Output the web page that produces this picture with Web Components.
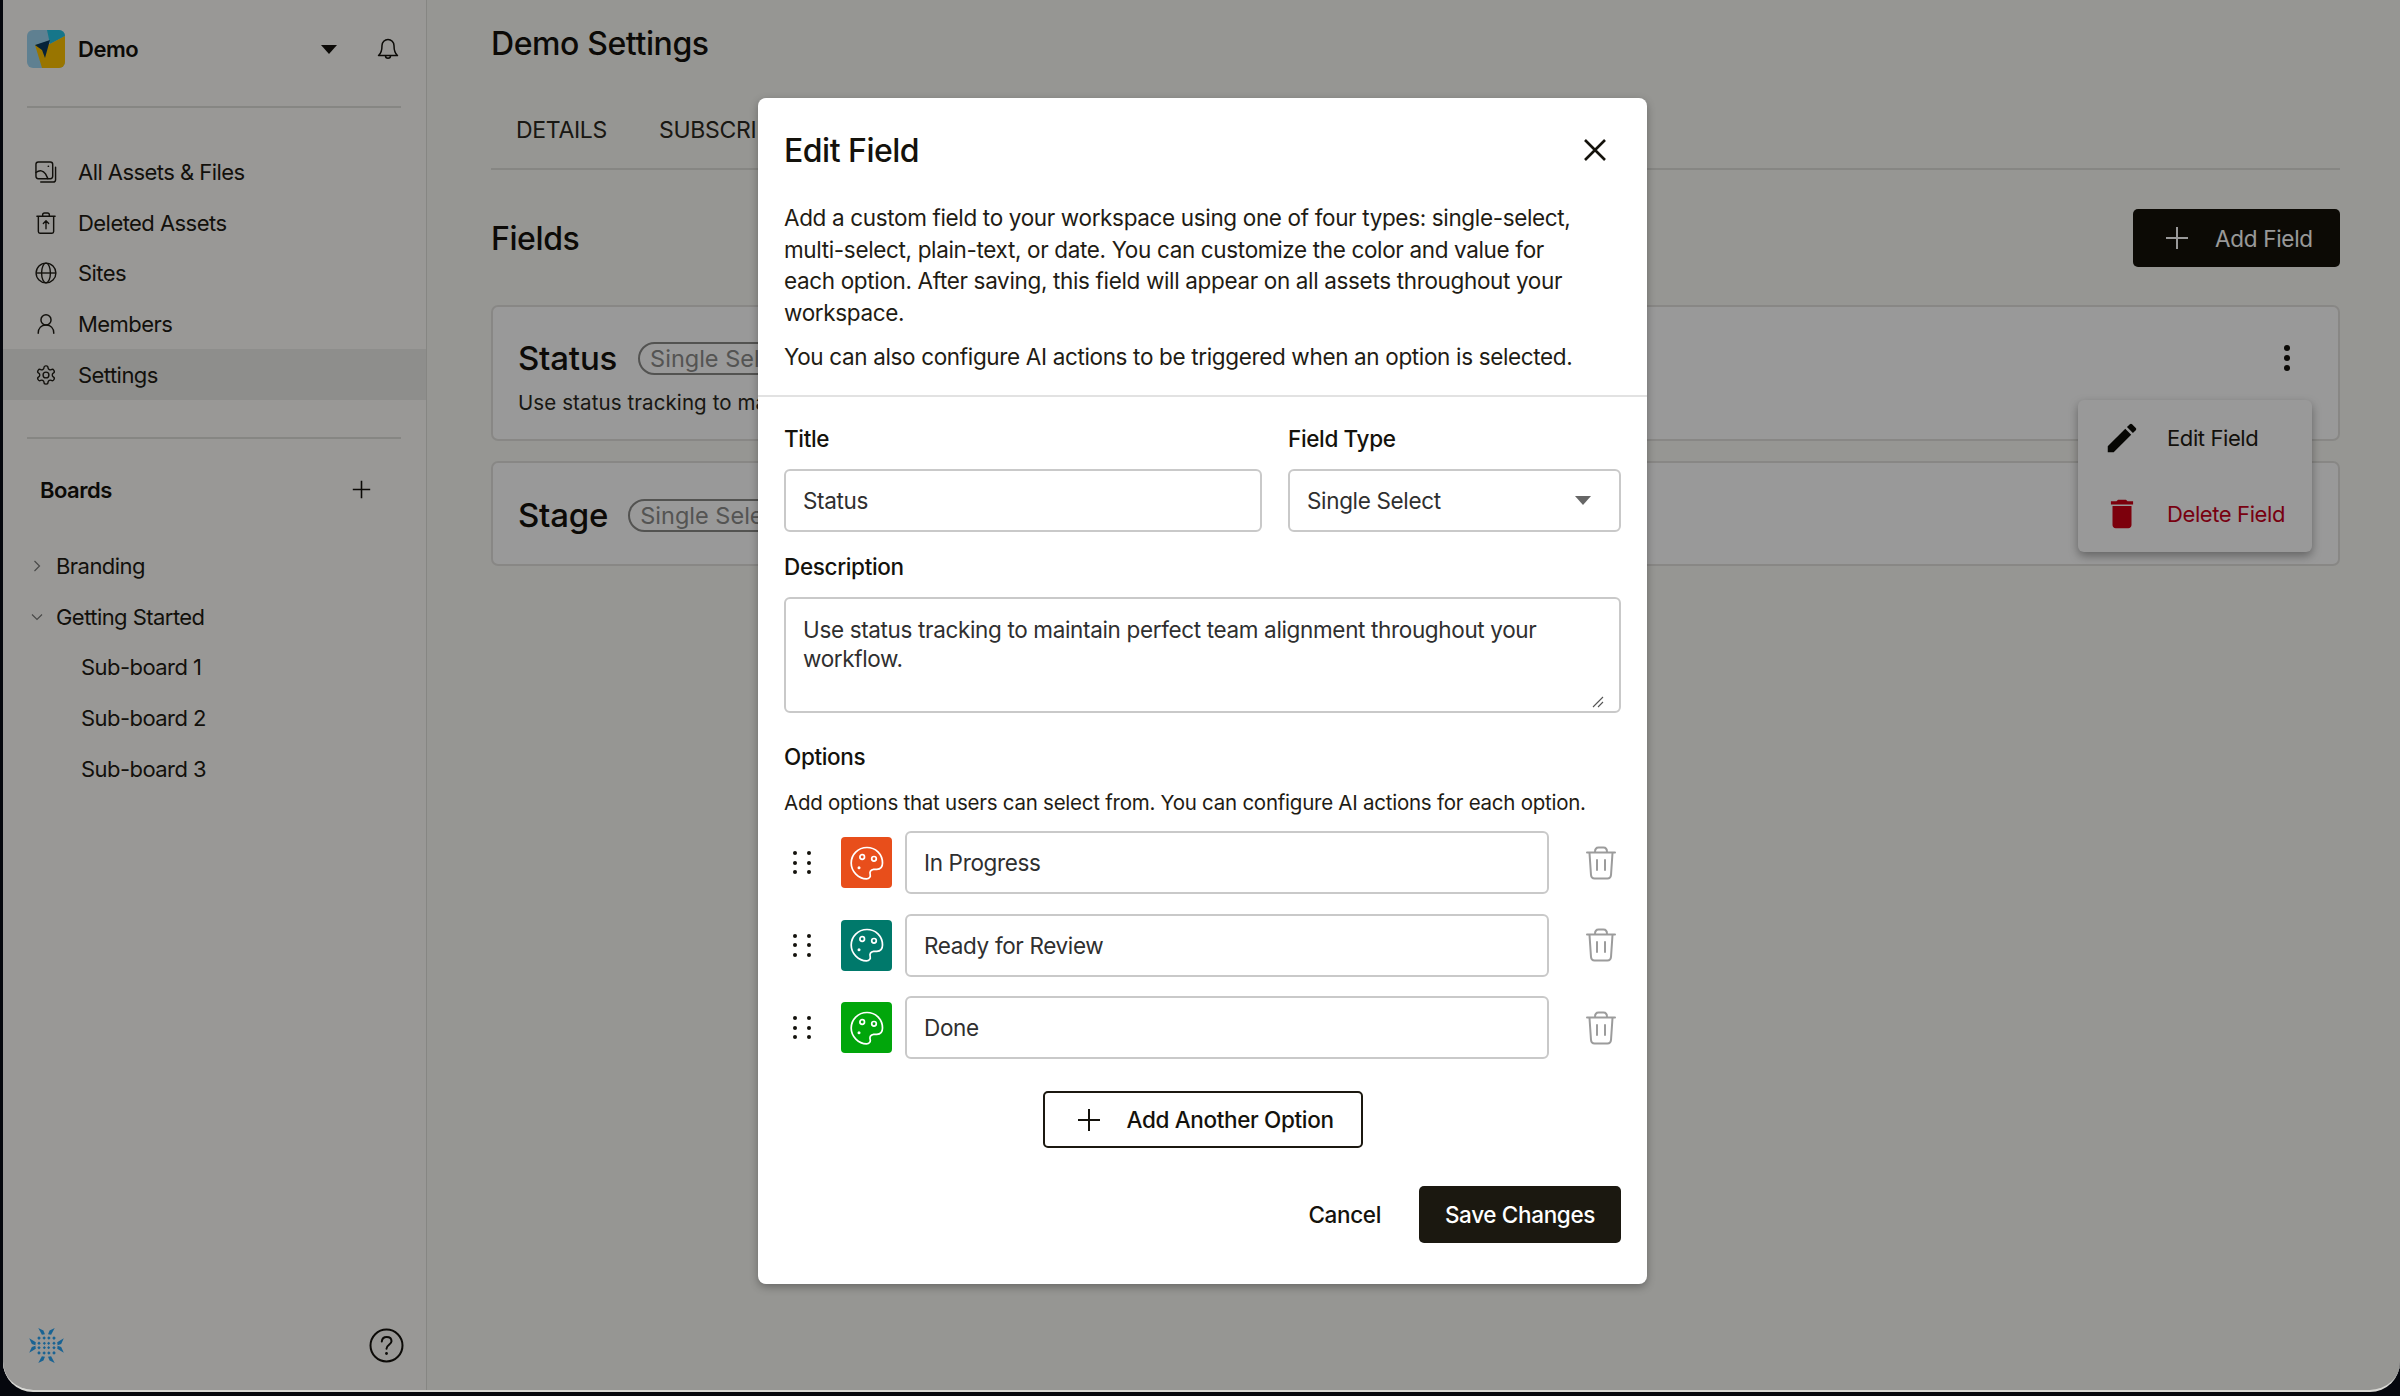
<!DOCTYPE html>
<html>
<head>
<meta charset="utf-8">
<title>Demo Settings</title>
<style>
  html, body { margin: 0; padding: 0; background: #05070d; }
  body { width: 2400px; height: 1396px; overflow: hidden; font-family: Inter, "Liberation Sans", sans-serif; color: #1b1810; }
</style>
</head>
<body>
<app-shell>
  <app-sidebar slot="sidebar"></app-sidebar>
  <settings-page slot="main"></settings-page>
  <action-menu slot="menu"></action-menu>
  <edit-field-dialog slot="dialog"></edit-field-dialog>
</app-shell>

<script>
const ICONS = {
  assets: `<svg viewBox="0 0 23 23" fill="none" stroke="currentColor" stroke-width="1.5" stroke-linejoin="round" stroke-linecap="round"><rect x="1" y="1" width="17.5" height="17.5" rx="2.5"/><path d="M1 12c4-3 7.5-2 10 1.5l2.5 5"/><circle cx="14" cy="5.5" r=".9" fill="currentColor" stroke="none"/><path d="M21.5 6.5v13a2.5 2.5 0 0 1-2.500 2.500H6"/></svg>`,
  deleted: `<svg viewBox="0 0 23 23" fill="none" stroke="currentColor" stroke-width="1.5" stroke-linejoin="round" stroke-linecap="round"><path d="M2 4.500h19"/><path d="M8 4.300V3a2 2 0 0 1 2-2h3a2 2 0 0 1 2 2v1.300"/><path d="M3.500 5v15.500a1.700 1.700 0 0 0 1.700 1.700h12.600a1.700 1.700 0 0 0 1.700-1.700V5"/><path d="M11.500 17.500v-8M8.700 12l2.800-2.800 2.800 2.800" stroke-width="1.400"/></svg>`,
  globe: `<svg viewBox="0 0 24 24" fill="none" stroke="currentColor" stroke-width="1.500"><circle cx="12" cy="12" r="10.800"/><ellipse cx="12" cy="12" rx="4.800" ry="10.800"/><path d="M1.200 12h21.600"/></svg>`,
  person: `<svg viewBox="0 0 24 24" fill="none" stroke="currentColor" stroke-width="1.600" stroke-linecap="round"><circle cx="12" cy="7.500" r="5.500"/><path d="M3.500 22c0-5.500 3.500-9 8.500-9s8.500 3.500 8.500 9"/></svg>`,
  gear: `<svg viewBox="0 0 24 24" fill="none" stroke="currentColor" stroke-width="1.500" stroke-linejoin="round"><path d="M12.220 2h-.44a2 2 0 0 0-2 2v.18a2 2 0 0 1-1 1.730l-.43.250a2 2 0 0 1-2 0l-.15-.08a2 2 0 0 0-2.730.730l-.22.380a2 2 0 0 0 .730 2.730l.150.100a2 2 0 0 1 1 1.720v.510a2 2 0 0 1-1 1.740l-.150.090a2 2 0 0 0-.730 2.730l.220.380a2 2 0 0 0 2.730.730l.150-.08a2 2 0 0 1 2 0l.430.250a2 2 0 0 1 1 1.730V20a2 2 0 0 0 2 2h.440a2 2 0 0 0 2-2v-.18a2 2 0 0 1 1-1.730l.430-.250a2 2 0 0 1 2 0l.150.080a2 2 0 0 0 2.730-.730l.220-.390a2 2 0 0 0-.730-2.730l-.150-.08a2 2 0 0 1-1-1.740v-.5a2 2 0 0 1 1-1.740l.150-.090a2 2 0 0 0 .730-2.730l-.220-.380a2 2 0 0 0-2.730-.730l-.150.080a2 2 0 0 1-2 0l-.430-.250a2 2 0 0 1-1-1.730V4a2 2 0 0 0-2-2z"/><circle cx="12" cy="12" r="3.200"/></svg>`,
  bell: `<svg viewBox="0 0 24 24" fill="none" stroke="currentColor" stroke-width="1.500" stroke-linecap="round" stroke-linejoin="round"><path d="M6 8.500a6 6 0 0 1 12 0c0 6.500 1.500 8.500 3.500 10H2.500c2-1.500 3.500-3.500 3.500-10z"/><path d="M9.500 18.800a2.500 2.500 0 0 0 5 0"/></svg>`,
  plus: `<svg viewBox="0 0 24 24" fill="none" stroke="currentColor" stroke-width="2"><path d="M12 1v22M1 12h22"/></svg>`,
  palette: `<svg viewBox="0 0 34 34" fill="none" stroke="currentColor" stroke-width="1.700" stroke-linejoin="round"><path d="M17 1.500C8 1.500 1.200 8.500 1.200 17S8.500 32.800 16.500 32.800c2.800 0 4.300-2 3.700-4.200-.800-2.800.500-5 3.400-5.300h3.200c3.500 0 5.700-2.400 5.700-6.300C32.500 8 25.500 1.500 17 1.500z"/><circle cx="12.200" cy="11" r="2.300"/><circle cx="24" cy="12.800" r="2.300"/><circle cx="9" cy="21.800" r="1.500" fill="currentColor" stroke="none"/></svg>`,
  trash: `<svg viewBox="0 0 30 34" fill="none" stroke="currentColor" stroke-width="2" stroke-linecap="round" stroke-linejoin="round"><path d="M1 6.500h28"/><path d="M9 6c0-3 1.500-4.500 3.500-4.500h5C19.500 1.500 21 3 21 6"/><path d="M3.500 7L5 29c.200 2 1.500 3.500 3.500 3.500h13c2 0 3.300-1.500 3.500-3.500L26.500 7"/><path d="M11 14v10M19 14v10"/></svg>`,
  edit: `<svg viewBox="0 0 24 24" fill="currentColor"><path d="M3 17.250V21h3.750L17.810 9.940l-3.750-3.750L3 17.250zM20.710 7.040a1 1 0 0 0 0-1.410l-2.340-2.340a1 1 0 0 0-1.410 0l-1.830 1.830 3.750 3.750 1.830-1.830z"/></svg>`,
  remove: `<svg viewBox="0 0 24 24" fill="currentColor"><path d="M6 19c0 1.100.9 2 2 2h8c1.100 0 2-.9 2-2V7H6v12zM19 4h-3.500l-1-1h-5l-1 1H5v2h14V4z"/></svg>`
};

// shared shadow root setup, every component just hands over its html
class Base extends HTMLElement {
  constructor() {
    super();
    this.attachShadow({mode: 'open'});
  }
  connectedCallback() {
    this.shadowRoot.innerHTML = this.render();
  }
}

class AppShell extends Base {
  render() {
    return `<style>
      :host { display: block; width: 2400px; height: 1396px; }
      .window {
        position: relative; box-sizing: border-box; height: 1392px; margin-left: 3px;
        display: flex; overflow: hidden; background: #fbfaf6;
        border-bottom: 2px solid #d8d8d4; border-radius: 0 0 30px 30px;
      }
      .backdrop { position: absolute; inset: 0; background: rgba(0,0,0,.4); }
    </style>
    <div class="window">
      <slot name="sidebar"></slot>
      <slot name="main"></slot>
      <slot name="menu"></slot>
      <div class="backdrop"></div>
      <slot name="dialog"></slot>
    </div>`;
  }
}

class NavItem extends Base {
  render() {
    return `<style>
      :host { display: flex; align-items: center; height: 50.600px; padding-left: 32px; gap: 21px; font-size: 22px; letter-spacing: -.55px; color: #1f1c14; }
      :host([active]) { background: #ededea; }
      svg { width: 22px; height: 22px; flex: none; }
    </style>${ICONS[this.getAttribute('icon')]}<slot></slot>`;
  }
}

class TreeItem extends Base {
  render() {
    const level = this.getAttribute('level');
    const open = this.getAttribute('state');
    let arrow = '';
    if (open === 'closed') arrow = '<svg viewBox="0 0 12 12"><path d="M3.500 1l5 5-5 5"/></svg>';
    if (open === 'open') arrow = '<svg viewBox="0 0 12 12"><path d="M1 3.500l5 5 5-5"/></svg>';
    return `<style>
      :host { display: flex; align-items: center; height: 50.600px; font-size: 22px; letter-spacing: -.55px; color: #1f1c14; padding-left: ${level === '1' ? 78 : 28}px; }
      svg { width: 12px; height: 12px; flex: none; margin-right: 13px; fill: none; stroke: #7a7a78; stroke-width: 1.200; }
    </style>${arrow}<slot></slot>`;
  }
}

class AppSidebar extends Base {
  render() {
    return `<style>
      :host { display: flex; flex-direction: column; box-sizing: border-box; width: 424px; flex: none; height: 100%; background: #fffefb; border-right: 1px solid #e0dfdb; }
      .head { display: flex; align-items: center; height: 38px; margin: 30px 25px 0 24px; }
      .logo { width: 38px; height: 38px; flex: none; }
      .name { font-weight: 600; font-size: 22px; letter-spacing: -.5px; margin-left: 13px; color: #14120c; }
      .caret { width: 0; height: 0; border: 8px solid transparent; border-top: 9px solid #14120c; border-bottom: 0; margin-left: auto; margin-right: 39px; }
      .bell { width: 24px; height: 24px; margin-right: 1px; color: #14120c; }
      .rule { height: 2px; background: #e0dfdb; margin: 38px 25px 0 24px; flex: none; }
      nav { margin-top: 39px; }
      .boards { display: flex; align-items: center; justify-content: space-between; height: 40px; margin-top: 31px; padding: 0 55px 0 37px; font-weight: 600; font-size: 22px; letter-spacing: -.5px; color: #14120c; }
      .boards svg { width: 19px; height: 19px; color: #14120c; }
      .tree { margin-top: 31px; }
      .foot { margin-top: auto; display: flex; align-items: center; justify-content: space-between; padding: 0 22px 26px 25px; }
      .snow { width: 37px; height: 37px; }
      .help { width: 35px; height: 35px; margin-right: 0; }
    </style>
    <div class="head">
      <svg class="logo" viewBox="0 0 38 38">
        <defs><clipPath id="lg"><rect width="38" height="38" rx="6"/></clipPath></defs>
        <g clip-path="url(#lg)">
          <rect width="38" height="38" fill="#9fd6f2"/>
          <path d="M20 0h18v6l-15 8z" fill="#26c5e6"/>
          <path d="M38 6v32H15L8 15l15-1z" fill="#ffc400"/>
          <path d="M8 15l15-5-5 18-3-8z" fill="#0a3a5e"/>
        </g>
      </svg>
      <span class="name">Demo</span>
      <span class="caret"></span>
      <span class="bell">${ICONS.bell}</span>
    </div>
    <div class="rule"></div>
    <nav>
      <nav-item icon="assets">All Assets &amp; Files</nav-item>
      <nav-item icon="deleted">Deleted Assets</nav-item>
      <nav-item icon="globe">Sites</nav-item>
      <nav-item icon="person">Members</nav-item>
      <nav-item icon="gear" active>Settings</nav-item>
    </nav>
    <div class="rule" style="margin-top:37px"></div>
    <div class="boards"><span>Boards</span>${ICONS.plus}</div>
    <div class="tree">
      <tree-item state="closed">Branding</tree-item>
      <tree-item state="open">Getting Started</tree-item>
      <tree-item level="1">Sub-board 1</tree-item>
      <tree-item level="1">Sub-board 2</tree-item>
      <tree-item level="1">Sub-board 3</tree-item>
    </div>
    <div class="foot">
      <svg class="snow" viewBox="0 0 36 36" fill="#2aa5f5">
        <defs>
          <g id="q">
            <path d="M10 1l5 2.500 1.500 3.500-3 .5z"/>
            <path d="M1.200 11l2.500 5.500 3.500 1.300.4-3z"/>
            <rect x="9.500" y="9.500" width="2.500" height="2.500" transform="rotate(45 10.700 10.700)"/>
            <rect x="14.500" y="9.500" width="2.400" height="2.400" transform="rotate(45 15.700 10.700)"/>
            <rect x="9.500" y="14.500" width="2.400" height="2.400" transform="rotate(45 10.700 15.700)"/>
            <rect x="14.800" y="14.800" width="2.200" height="2.200" transform="rotate(45 15.900 15.900)"/>
          </g>
        </defs>
        <use href="#q"/>
        <use href="#q" transform="translate(36 0) scale(-1 1)"/>
        <use href="#q" transform="translate(0 36) scale(1 -1)"/>
        <use href="#q" transform="translate(36 36) scale(-1 -1)"/>
      </svg>
      <svg class="help" viewBox="0 0 35 35" fill="none" stroke="#14120c" stroke-width="2">
        <circle cx="17.500" cy="17.500" r="16"/>
        <path d="M12.800 13.500c.3-3 2.300-4.500 4.900-4.500 2.800 0 4.800 1.700 4.800 4.200 0 3.500-5 3.800-5 7.500" stroke-linecap="round"/>
        <circle cx="17.500" cy="25.500" r="1.400" fill="#14120c" stroke="none"/>
      </svg>
    </div>`;
  }
}

class FieldCard extends Base {
  render() {
    return `<style>
      :host { display: block; box-sizing: border-box; border: 2px solid #e3e2de; border-radius: 7px; background: #fff; padding-left: 25px; height: ${this.getAttribute('h')}px; }
      .row { display: flex; align-items: center; padding-top: ${this.getAttribute('pt')}px; height: 36px; }
      .name { font-size: 33px; font-weight: 500; letter-spacing: -.2px; color: #14120c; margin-right: ${this.getAttribute('gap')}px; }
      .pill { box-sizing: border-box; height: 33px; display: flex; align-items: center; padding: 0 14px 0 10px; border: 2px solid #8a8a88; border-radius: 17px; font-size: 23.500px; color: #8c8c8a; white-space: nowrap; }
      .dots { margin-left: auto; margin-right: 48px; display: flex; flex-direction: column; gap: 3.500px; }
      .dots i { width: 6.500px; height: 6.500px; border-radius: 50%; background: #14120c; }
      p { margin: 14px 0 0; font-size: 20.500px; letter-spacing: .1px; color: #2b2820; white-space: nowrap; }
    </style>
    <div class="row"><span class="name"><slot name="title"></slot></span><span class="pill">Single Select</span>${this.hasAttribute('menu') ? '<span class="dots"><i></i><i></i><i></i></span>' : ''}</div>
    <p><slot></slot></p>`;
  }
}

class SettingsPage extends Base {
  render() {
    return `<style>
      :host { display: block; flex: 1; min-width: 0; box-sizing: border-box; padding: 0 60px 0 64px; }
      h1, h2 { margin: 0; font-weight: 500; font-size: 32px; letter-spacing: -.4px; color: #14120c; }
      h1 { height: 92px; padding-top: 24px; box-sizing: border-box; line-height: 40px; }
      .tabs { display: flex; gap: 52px; height: 78px; box-sizing: border-box; align-items: center; padding: 0 0 0 25px; border-bottom: 2px solid #e0dfdb; font-size: 23px; letter-spacing: -.3px; color: #2b2820; }
      .bar { display: flex; align-items: center; justify-content: space-between; height: 58px; margin-top: 39px; }
      .add { display: flex; align-items: center; gap: 26px; width: 207px; height: 58px; box-sizing: border-box; padding-left: 32px; background: #141209; border-radius: 5px; color: #fff; font-size: 22.500px; letter-spacing: -.3px; }
      .add svg { width: 24px; height: 24px; flex: none; }
      .cards { display: flex; flex-direction: column; gap: 20px; margin-top: 38px; }
    </style>
    <h1>Demo Settings</h1>
    <div class="tabs"><span>DETAILS</span><span>SUBSCRIPTION</span><span>FIELDS</span></div>
    <div class="bar"><h2>Fields</h2><div class="add">${ICONS.plus}<span>Add Field</span></div></div>
    <div class="cards">
      <field-card h="136" pt="33" gap="21" menu><span slot="title">Status</span>Use status tracking to maintain perfect team alignment throughout your workflow.</field-card>
      <field-card h="105" pt="34" gap="20"><span slot="title">Stage</span></field-card>
    </div>`;
  }
}

class ActionMenu extends Base {
  render() {
    return `<style>
      :host { position: absolute; top: 400px; left: 2075px; width: 234px; height: 152px; background: #fff; border-radius: 6px; box-shadow: 0 4px 10px rgba(0,0,0,.35); }
      div { display: flex; align-items: center; gap: 26px; height: 76px; padding-left: 25px; font-size: 22px; letter-spacing: -.4px; color: #1f1c14; }
      svg { width: 38px; height: 38px; flex: none; color: #0b0a06; }
      .del { color: #c8001c; }
      .del svg { color: #cf0015; }
    </style>
    <div>${ICONS.edit}<span>Edit Field</span></div>
    <div class="del">${ICONS.remove}<span>Delete Field</span></div>`;
  }
}

class OptionRow extends Base {
  render() {
    return `<style>
      :host { display: flex; align-items: center; height: 63px; }
      .drag { display: grid; grid-template-columns: 4px 4px; column-gap: 10px; row-gap: 5.500px; margin-left: 9px; }
      .drag i { width: 4px; height: 4px; border-radius: 50%; background: #14120c; }
      .swatch { width: 51px; height: 51px; margin-left: 30px; flex: none; border-radius: 4px; background: ${this.getAttribute('color')}; color: #fff; display: flex; align-items: center; justify-content: center; }
      .swatch svg { width: 34px; height: 34px; }
      .input { box-sizing: border-box; width: 644px; height: 63px; margin-left: 13px; border: 2px solid #c9c9c9; border-radius: 6px; padding-left: 17px; display: flex; align-items: center; font-size: 22.500px; letter-spacing: -.35px; color: #2f2f2f; }
      .bin { width: 30px; height: 34px; margin-left: 37px; color: #9c9c9c; }
    </style>
    <span class="drag"><i></i><i></i><i></i><i></i><i></i><i></i></span>
    <span class="swatch">${ICONS.palette}</span>
    <div class="input"><slot></slot></div>
    <span class="bin">${ICONS.trash}</span>`;
  }
}

class EditFieldDialog extends Base {
  render() {
    return `<style>
      :host { position: absolute; top: 98px; left: 755px; width: 889px; height: 1186px; box-sizing: border-box; background: #fff; border-radius: 8px; box-shadow: 0 3px 8px rgba(0,0,0,.3); color: #14120c; }
      .top { padding: 0 26px; height: 299px; box-sizing: border-box; border-bottom: 2px solid #e2e2e2; }
      .title { display: flex; align-items: center; justify-content: space-between; height: 104px; }
      h3 { margin: 0; font-size: 32px; font-weight: 500; letter-spacing: -.5px; }
      .x { width: 22px; height: 22px; margin-right: 15px; }
      p { margin: 0; font-size: 22.500px; line-height: 31.500px; letter-spacing: -.35px; color: #1f1c14; white-space: nowrap; }
      .more { margin-top: 12.500px; }
      form { display: block; padding: 0 26px; }
      .split { display: flex; gap: 26px; padding-top: 27px; }
      label { display: block; font-size: 22.500px; line-height: 30px; font-weight: 500; letter-spacing: -.35px; color: #14120c; margin-bottom: 15px; }
      .input { box-sizing: border-box; height: 63px; border: 2px solid #c9c9c9; border-radius: 6px; padding: 0 17px; display: flex; align-items: center; justify-content: space-between; font-size: 22.500px; letter-spacing: -.35px; color: #2f2f2f; }
      .caret { width: 0; height: 0; border: 8px solid transparent; border-top: 9px solid #666; border-bottom: 0; margin-right: 11px; }
      .area { position: relative; box-sizing: border-box; height: 116px; border: 2px solid #c9c9c9; border-radius: 6px; padding: 17px 17px 0; font-size: 22.500px; line-height: 28.500px; letter-spacing: -.35px; color: #2f2f2f; white-space: nowrap; }
      .grip { position: absolute; right: 15px; bottom: 3px; width: 12px; height: 12px; }
      .hint { margin: 0 0 13px; font-size: 20.500px; letter-spacing: -.25px; line-height: 30px; color: #1f1c14; }
      .rows { display: flex; flex-direction: column; gap: 19.500px; }
      .another { display: flex; align-items: center; gap: 26px; box-sizing: border-box; width: 320px; height: 57px; margin: 32px auto 0; padding-left: 32px; border: 2px solid #1b1810; border-radius: 5px; font-size: 22.500px; font-weight: 500; letter-spacing: -.35px; }
      .another svg { width: 24px; height: 24px; flex: none; }
      .actions { display: flex; justify-content: flex-end; align-items: center; margin-top: 38px; }
      .cancel { font-size: 22.500px; font-weight: 500; letter-spacing: -.35px; margin-right: 38px; }
      .save { display: flex; align-items: center; justify-content: center; width: 202px; height: 57px; background: #1b1810; color: #fff; border-radius: 5px; font-size: 22.500px; font-weight: 500; letter-spacing: -.35px; }
    </style>
    <div class="top">
      <div class="title"><h3>Edit Field</h3>
        <svg class="x" viewBox="0 0 22 22" fill="none" stroke="#14120c" stroke-width="2.600"><path d="M1 1l20 20M21 1L1 21"/></svg>
      </div>
      <p>Add a custom field to your workspace using one of four types: single-select,<br>multi-select, plain-text, or date. You can customize the color and value for<br>each option. After saving, this field will appear on all assets throughout your<br>workspace.</p>
      <p class="more">You can also configure AI actions to be triggered when an option is selected.</p>
    </div>
    <form>
      <div class="split">
        <div style="width:478px"><label>Title</label><div class="input">Status</div></div>
        <div style="width:333px"><label>Field Type</label><div class="input">Single Select<span class="caret"></span></div></div>
      </div>
      <label style="margin-top:20px">Description</label>
      <div class="area">Use status tracking to maintain perfect team alignment throughout your<br>workflow.
        <svg class="grip" viewBox="0 0 12 12" fill="none" stroke="#555" stroke-width="1.100"><path d="M1 11L11 1M6 11l5-5"/></svg>
      </div>
      <label style="margin:29px 0 0">Options</label>
      <p class="hint" style="margin-top:16px">Add options that users can select from. You can configure AI actions for each option.</p>
      <div class="rows">
        <option-row color="#e84e1b">In Progress</option-row>
        <option-row color="#00796b">Ready for Review</option-row>
        <option-row color="#01a60b">Done</option-row>
      </div>
      <div class="another">${ICONS.plus}<span>Add Another Option</span></div>
      <div class="actions"><span class="cancel">Cancel</span><span class="save">Save Changes</span></div>
    </form>`;
  }
}

customElements.define('app-shell', AppShell);
customElements.define('nav-item', NavItem);
customElements.define('tree-item', TreeItem);
customElements.define('app-sidebar', AppSidebar);
customElements.define('field-card', FieldCard);
customElements.define('settings-page', SettingsPage);
customElements.define('action-menu', ActionMenu);
customElements.define('option-row', OptionRow);
customElements.define('edit-field-dialog', EditFieldDialog);
</script>
</body>
</html>
